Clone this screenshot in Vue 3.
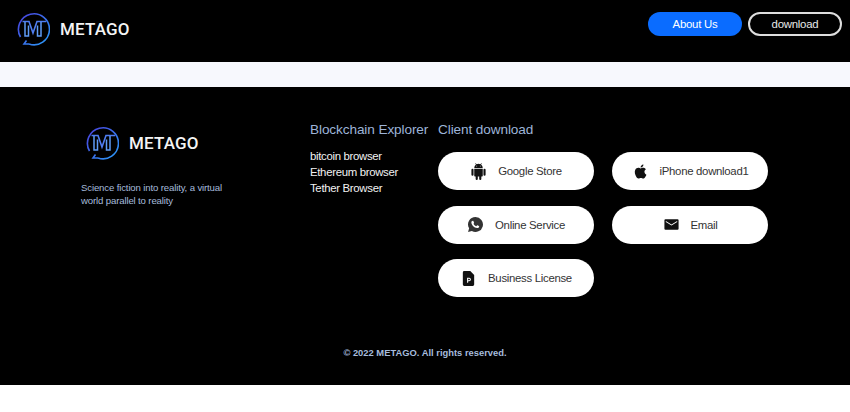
<template>
  <div class="page">
    <header class="top">
      <div class="logo">
        <svg class="mark" viewBox="0 0 34 34">
          <defs>
            <linearGradient id="ring" x1="0" y1="0" x2="1" y2="1">
              <stop offset="0" stop-color="#4a3fdc" />
              <stop offset="1" stop-color="#2a9cf8" />
            </linearGradient>
          </defs>
          <path d="M4.500 25A15.500 15.500 0 1 1 13 32M13 32H8l2.500-3.500" fill="none" stroke="url(#ring)" stroke-width="1.600" />
          <path d="M6.500 9.500h6.500L17 21l4-11.500h9" fill="none" stroke="#4f7df0" stroke-width="1.600" />
          <path d="M9 10v14h3.500V13.500M25 10v14h-3.500V13.500" fill="none" stroke="#5f9cf6" stroke-width="1.500" />
        </svg>
        <span class="word">METAGO</span>
      </div>
      <div class="top-btns">
        <a class="pill blue">About Us</a>
        <a class="pill ghost">download</a>
      </div>
    </header>
    <div class="strip"></div>
    <footer class="foot">
      <div class="cols">
        <div class="about">
          <div class="logo small">
            <svg class="mark" viewBox="0 0 34 34">
              <path d="M4.500 25A15.500 15.500 0 1 1 13 32M13 32H8l2.500-3.500" fill="none" stroke="url(#ring)" stroke-width="1.600" />
              <path d="M6.500 9.500h6.500L17 21l4-11.500h9" fill="none" stroke="#4f7df0" stroke-width="1.600" />
              <path d="M9 10v14h3.500V13.500M25 10v14h-3.500V13.500" fill="none" stroke="#5f9cf6" stroke-width="1.500" />
            </svg>
            <span class="word">METAGO</span>
          </div>
          <p class="slogan">Science fiction into reality, a virtual world parallel to reality</p>
        </div>
        <div class="explorer">
          <h3>Blockchain Explorer</h3>
          <ul>
            <li v-for="b in browsers" :key="b">{{ b }}</li>
          </ul>
        </div>
        <div class="client">
          <h3>Client download</h3>
          <div class="grid">
            <a v-for="d in downloads" :key="d.label" class="dl">
              <svg class="ico" viewBox="0 0 24 24" v-html="d.icon"></svg>
              <span>{{ d.label }}</span>
            </a>
          </div>
        </div>
      </div>
      <p class="copy">© 2022 METAGO. All rights reserved.</p>
    </footer>
  </div>
</template>
<script setup>
const browsers = ['bitcoin browser', 'Ethereum browser', 'Tether Browser']
const downloads = [
  {
    label: 'Google Store',
    icon: '<path fill="#111" d="M6 18a1 1 0 0 0 1 1h1v3.500a1.500 1.500 0 0 0 3 0V19h2v3.500a1.500 1.500 0 0 0 3 0V19h1a1 1 0 0 0 1-1V8H6zM3.500 8A1.500 1.500 0 0 0 2 9.500v7a1.500 1.500 0 0 0 3 0v-7A1.500 1.500 0 0 0 3.500 8zm17 0a1.500 1.500 0 0 0-1.500 1.500v7a1.500 1.500 0 0 0 3 0v-7A1.500 1.500 0 0 0 20.500 8zM15.500 2.200l1.300-1.300-.7-.7-1.500 1.500A6 6 0 0 0 12 1a6 6 0 0 0-2.600.700L7.900.2l-.7.700 1.300 1.300A5.900 5.900 0 0 0 6 7h12a5.900 5.900 0 0 0-2.500-4.800zM10 5H9V4h1zm5 0h-1V4h1z"/>'
  },
  {
    label: 'iPhone download1',
    icon: '<path fill="#111" d="M17.500 12.600c0-2.500 2-3.700 2.100-3.800-1.200-1.700-3-1.900-3.600-2-1.500-.2-3 .9-3.800.9s-2-.9-3.300-.9c-1.700 0-3.300 1-4.100 2.500-1.800 3.100-.5 7.600 1.200 10.100.9 1.200 1.900 2.600 3.200 2.500 1.300 0 1.800-.8 3.300-.8s2 .8 3.300.8c1.400 0 2.300-1.200 3.100-2.500 1-1.400 1.400-2.800 1.400-2.900-.1 0-2.800-1.100-2.800-4zM15.100 5.100c.7-.8 1.100-2 1-3.100-1 0-2.200.7-2.900 1.500-.6.700-1.200 1.900-1 3 1.100.1 2.200-.6 2.900-1.400z"/>'
  },
  {
    label: 'Online Service',
    icon: '<path fill="#333" fill-rule="evenodd" d="M12 1.500A10.500 10.500 0 0 0 3 17.400L1.500 22.500l5.300-1.400A10.500 10.500 0 1 0 12 1.500zM8.300 6.800c.3 0 .6 0 .8.500l.9 2.100c.1.300 0 .5-.1.700l-.8 1c.9 1.600 2.100 2.700 3.900 3.500l1.100-1.300c.2-.2.400-.3.700-.2l2 1c.4.200.5.400.4.800-.3 1.600-1.600 2.300-3 2.200-3.900-.5-7.500-4-8-7.500-.2-1.500.7-2.800 2.100-2.800z"/>'
  },
  {
    label: 'Email',
    icon: '<path fill="#111" fill-rule="evenodd" d="M3.500 4.500h17a1.500 1.500 0 0 1 1.500 1.500v12a1.500 1.500 0 0 1-1.500 1.500h-17A1.500 1.500 0 0 1 2 18V6a1.500 1.500 0 0 1 1.500-1.500zM4 7v1.300l8 5 8-5V7l-8 5z"/>'
  },
  {
    label: 'Business License',
    icon: '<path fill="#111" fill-rule="evenodd" d="M6 1.500h8.500L20 7v13.500a2 2 0 0 1-2 2H6a2 2 0 0 1-2-2v-17a2 2 0 0 1 2-2zm4 9.500v7h1.500v-2.200H13a2.400 2.400 0 0 0 0-4.800zm1.500 1.300H13a1.100 1.100 0 0 1 0 2.200h-1.500z"/>'
  }
]
</script>
<style>
html,
body {
  margin: 0;
  background: #fff;
}
</style>
<style scoped>
.page {
  font-family: "Liberation Sans", Arial, sans-serif;
  height: 412px;
  overflow: hidden;
}
.top {
  height: 62px;
  background: #000;
  display: flex;
  justify-content: space-between;
  padding: 11px 8px 0 16px;
  box-sizing: border-box;
}
.logo {
  display: flex;
  align-items: center;
  gap: 10px;
  height: 36px;
}
.logo .mark {
  width: 34px;
  height: 34px;
}
.word {
  font-family: "Roboto", sans-serif;
  font-weight: 500;
  font-size: 17px;
  letter-spacing: 0.15px;
  color: #f4f4f4;
}
.top-btns {
  display: flex;
  gap: 6px;
  align-items: flex-start;
}
.pill {
  width: 94px;
  height: 24px;
  box-sizing: border-box;
  border-radius: 12px;
  font-size: 11.400px;
  letter-spacing: -0.25px;
  line-height: 24px;
  text-align: center;
  color: #fff;
  margin-top: 1px;
}
.blue {
  background: #0a6cff;
}
.ghost {
  border: 2px solid #ddd;
  line-height: 20px;
  color: #e8e8e8;
}
.strip {
  height: 25px;
  background: #f7f8fd;
}
.foot {
  height: 298px;
  background: #000;
  box-sizing: border-box;
  padding: 34px 0 0 81px;
}
.cols {
  display: flex;
  height: 226px;
}
.about {
  width: 229px;
}
.logo.small {
  margin: 4px 0 0 4px;
}
.slogan {
  margin: 20px 0 0;
  width: 160px;
  font-size: 9.600px;
  letter-spacing: -0.14px;
  line-height: 13px;
  color: #a6bbdc;
}
.explorer {
  width: 128px;
}
h3 {
  margin: 0;
  font-size: 13.600px;
  letter-spacing: -0.1px;
  font-weight: 400;
  line-height: 17px;
  color: #9db4d8;
}
ul {
  list-style: none;
  margin: 10px 0 0;
  padding: 0;
}
li {
  font-size: 11.400px;
  letter-spacing: -0.32px;
  line-height: 16px;
  color: #f2f2f2;
}
.grid {
  display: grid;
  grid-template-columns: 156px 156px;
  column-gap: 18px;
  row-gap: 15.500px;
  margin-top: 14px;
}
.dl {
  height: 38px;
  border-radius: 19px;
  background: #fff;
  display: flex;
  align-items: center;
  justify-content: center;
  gap: 11px;
  font-size: 11.400px;
  letter-spacing: -0.3px;
  color: #333;
}
.ico {
  width: 17px;
  height: 17px;
}
.copy {
  margin: 0;
  padding-right: 81px;
  text-align: center;
  font-size: 9.400px;
  font-weight: 700;
  line-height: 12px;
  color: #a6bbdc;
}
</style>
